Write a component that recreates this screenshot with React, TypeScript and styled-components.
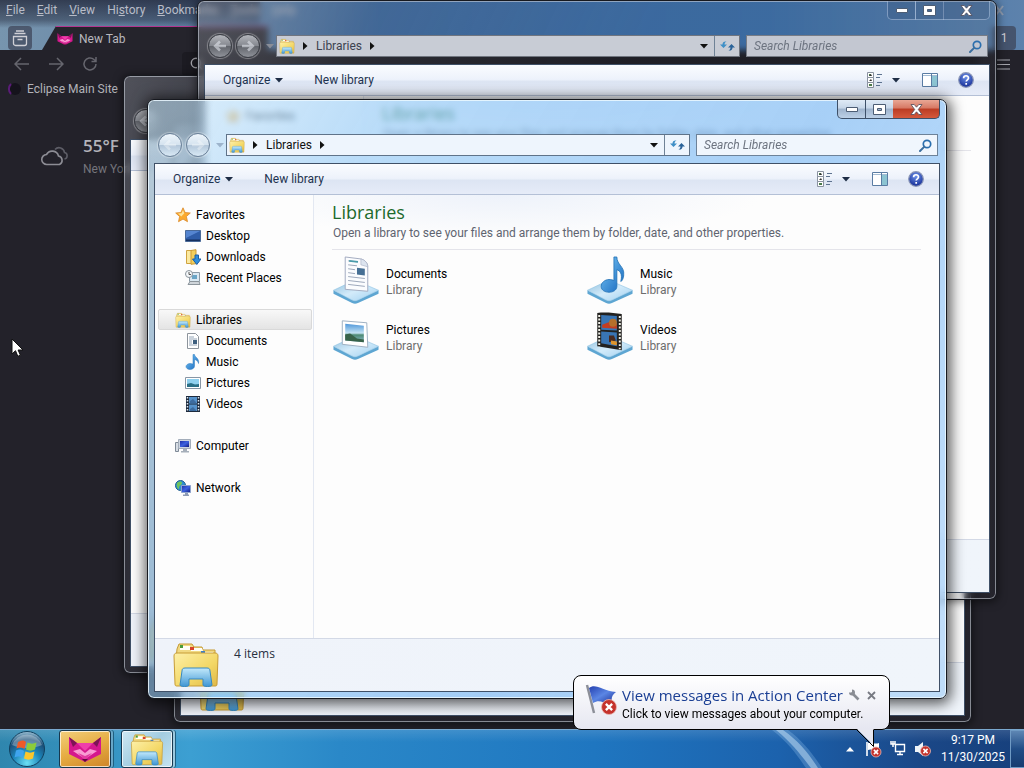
import React from "react";
import styled, { createGlobalStyle, css } from "styled-components";

const GlobalStyle = createGlobalStyle`
  * { box-sizing: border-box; }
  html, body { margin: 0; height: 100%; overflow: hidden; }
  body, button, input {
    font-family: Roboto, "Open Sans", sans-serif;
    font-size: 12px;
    line-height: 16px;
  }
  button { border: 0; padding: 0; margin: 0; background: none; color: inherit; }
  ul { list-style: none; margin: 0; padding: 0; }
  h1, p { margin: 0; font-weight: 400; }
  svg { display: block; flex: none; }
`;

const Desktop = styled.div`
  display: flex;
  flex-direction: column;
  height: 100vh;
  background: #23222a;
`;

const Workspace = styled.main`
  position: relative;
  flex: 1;
  min-height: 0;
  overflow: hidden;
`;

/* ---------- browser behind the folders ---------- */

const Browser = styled.section`
  display: flex;
  flex-direction: column;
  height: 100%;
  background: #23222a;
  color: #c6c6cc;
`;

const BrowserTop = styled.div`
  height: 50px;
  background:
    linear-gradient(180deg, rgba(24, 26, 44, 0.7) 0, rgba(24, 26, 44, 0.4) 20px, rgba(24, 26, 44, 0) 28px) 0 0 / 260px 30px no-repeat,
    linear-gradient(90deg, #7795ae 0, #6484a6 180px, #3a6ba6 380px, #3d70aa 75%, #5d82ac 100%);
`;

const MenuBar = styled.nav`
  display: flex;
  align-items: center;
  gap: 12px;
  height: 20px;
  padding: 0 11px 0 6px;
  color: #b9bdc8;
`;

const MenuSpace = styled.span`
  flex: 1;
`;

const TabStrip = styled.div`
  display: flex;
  align-items: stretch;
  height: 30px;
  padding: 6px 8px 0;
`;

const StripButton = styled.button`
  display: grid;
  place-items: center;
  width: 24px;
  height: 24px;
  border-radius: 4px;
  background: rgba(60, 66, 84, 0.7);
  color: #d0d0d6;
`;

const Tab = styled.button`
  display: flex;
  align-items: center;
  gap: 6px;
  width: 226px;
  margin-left: 10px;
  padding-left: 15px;
  background: #25242c;
  clip-path: polygon(14px 0, 100% 0, 100% 100%, 0 100%);
  border-top: 1px solid #b3358f;
  color: #b8b8be;
`;

const StripSpace = styled.span`
  flex: 1;
`;

const BrowserTools = styled.div`
  display: flex;
  align-items: center;
  gap: 18px;
  height: 28px;
  padding: 0 14px;
  color: #66666e;
`;

const UrlBox = styled.button`
  display: flex;
  align-items: center;
  flex: 1;
  height: 24px;
  margin-left: 66px;
  padding-left: 8px;
  border-radius: 4px;
  background: #1c1b22;
  color: #a9a9b0;
`;

const Bookmark = styled.a`
  display: flex;
  align-items: center;
  gap: 6px;
  height: 22px;
  padding-left: 6px;
  color: #b2b2b8;
  text-decoration: none;
`;

const Weather = styled.div`
  display: flex;
  align-items: center;
  gap: 12px;
  margin-top: 34px;
  padding-left: 39px;
  color: #75757c;
`;

const Temperature = styled.div`
  padding-bottom: 3px;
  font-family: "Open Sans", sans-serif;
  font-size: 17px;
  line-height: 24px;
  font-weight: 600;
  color: #b4b4ba;
`;

/* ---------- explorer windows ---------- */

type Place = { top: number; left: number; right: number; bottom: number };

const Frame = styled.section<{ $place: Place; $active?: boolean }>`
  position: absolute;
  top: ${(p) => p.$place.top}px;
  left: ${(p) => p.$place.left}px;
  right: ${(p) => p.$place.right}px;
  bottom: ${(p) => p.$place.bottom}px;
  display: flex;
  flex-direction: column;
  padding: 0 6px 6px;
  border: 1px solid #17191f;
  border-radius: 7px;
  backdrop-filter: blur(3px);
  ${(p) =>
    p.$active
      ? css`
          background:
            linear-gradient(90deg, rgba(110, 130, 145, 0.35) 0, rgba(110, 130, 145, 0.3) 45px, rgba(255, 255, 255, 0) 65px),
            linear-gradient(120deg, rgba(205, 232, 250, 0.65) 0, rgba(140, 198, 246, 0.6) 22%, rgba(122, 184, 244, 0.65) 60%, rgba(175, 212, 248, 0.75) 100%);
          box-shadow: inset 0 0 0 1px rgba(235, 248, 255, 0.85), 1px 2px 14px 3px rgba(0, 0, 0, 0.65);
        `
      : css`
          background: linear-gradient(115deg, rgba(150, 155, 165, 0.4) 0, rgba(90, 95, 105, 0.25) 160px, rgba(60, 66, 76, 0.1) 420px);
          box-shadow: inset 0 0 0 1px rgba(200, 205, 215, 0.6), 0 1px 8px 1px rgba(0, 0, 0, 0.5);
        `}
`;

const Caption = styled.div`
  display: flex;
  justify-content: flex-end;
  height: 30px;
`;

const CaptionButton = styled.button<{ $active?: boolean; $close?: boolean }>`
  display: grid;
  place-items: center;
  width: ${(p) => (p.$close ? 47 : 29)}px;
  height: 19px;
  border: 1px solid ${(p) => (p.$active ? "#3d5068" : "rgba(190, 210, 235, 0.5)")};
  border-top: 0;
  border-left-width: ${(p) => (p.$close ? 0 : 1)}px;
  margin-right: ${(p) => (p.$close ? 0 : -1)}px;
  border-radius: ${(p) => (p.$close ? "0 0 5px 0" : "0")};
  &:first-child { border-bottom-left-radius: 5px; }
  background: ${(p) =>
    !p.$active
      ? "rgba(30, 50, 85, 0.15)"
      : p.$close
        ? "linear-gradient(#e9a795 0, #d67863 45%, #bb3c23 50%, #d5593c 100%)"
        : "linear-gradient(#dfeaf6 0, #c6d6e8 45%, #9fb4cd 50%, #bcd0e6 100%)"};
`;

const NavRow = styled.div`
  display: flex;
  align-items: center;
  height: 30px;
  margin-bottom: 3px;
  padding: 0 2px 0 4px;
`;

const RoundButton = styled.button<{ $active?: boolean }>`
  display: grid;
  place-items: center;
  width: 24px;
  height: 24px;
  margin-right: 4px;
  border: 1px solid ${(p) => (p.$active ? "#6b8199" : "#3c3f46")};
  border-radius: 50%;
  color: ${(p) => (p.$active ? "rgba(255,255,255,.35)" : "rgba(225,228,235,.6)")};
  background: ${(p) =>
    p.$active
      ? "linear-gradient(#eef5fb 0, #d5e3ef 48%, #b3c7da 52%, #d9e9f5 100%)"
      : "linear-gradient(#b4b6bc 0, #85888f 48%, #62656c 52%, #8f9299 100%)"};
  box-shadow: 0 0 1px 1px rgba(255, 255, 255, 0.35);
`;

const Recent = styled.button`
  display: grid;
  place-items: center;
  width: 12px;
  height: 20px;
`;

const Address = styled.div<{ $active?: boolean }>`
  display: flex;
  align-items: center;
  flex: 1;
  height: 22px;
  border: 1px solid ${(p) => (p.$active ? "#5f7389" : "#70757f")};
  background: ${(p) => (p.$active ? "#eef5fd" : "#c8ccd5")};
  color: ${(p) => (p.$active ? "#111" : "#3d4250")};
`;

const Crumb = styled.button<{ $indent: number }>`
  display: flex;
  align-items: center;
  gap: 8px;
  padding-left: ${(p) => p.$indent}px;
`;

const Space = styled.span`
  flex: 1;
`;

const AddressButton = styled.button<{ $ruled?: boolean }>`
  display: grid;
  place-items: center;
  width: ${(p) => (p.$ruled ? 25 : 20)}px;
  height: 20px;
  border-left: ${(p) => (p.$ruled ? "1px solid #6f8296" : "0")};
`;

const Search = styled.label<{ $active?: boolean }>`
  display: flex;
  align-items: center;
  width: 242px;
  height: 22px;
  margin-left: 6px;
  padding: 0 5px 0 7px;
  border: 1px solid ${(p) => (p.$active ? "#6d8299" : "#777c86")};
  background: ${(p) => (p.$active ? "#f0f6fd" : "#c3c7d1")};
  input {
    flex: 1;
    min-width: 0;
    border: 0;
    padding: 0;
    background: transparent;
    outline: 0;
  }
  input::placeholder { color: #6d7480; font-style: italic; opacity: 1; }
`;

const Client = styled.div`
  display: flex;
  flex-direction: column;
  flex: 1;
  min-height: 0;
  border: 1px solid #3f5067;
  background: #fdfdfd;
  color: #000;
`;

const CommandBar = styled.div`
  display: flex;
  align-items: center;
  height: 31px;
  padding: 0 15px 0 18px;
  border-bottom: 1px solid #b4c0d6;
  background: linear-gradient(#fafcff 0, #edf2fb 48%, #dde5f3 55%, #e6ecf8 100%);
  color: #1e3350;
`;

const Command = styled.button`
  display: flex;
  align-items: center;
  gap: 5px;
  margin-right: 31px;
`;

const ToolIcon = styled.button<{ $gap: number }>`
  margin-left: ${(p) => p.$gap}px;
`;

const Body = styled.div`
  display: flex;
  flex: 1;
  min-height: 0;
`;

const Tree = styled.nav`
  width: 159px;
  padding: 9px 1px 0 3px;
  border-right: 1px solid #e3e8f2;
  ul + ul { margin-top: 21px; }
`;

const TreeItem = styled.a<{ $nested?: boolean; $selected?: boolean }>`
  display: flex;
  align-items: center;
  gap: 5px;
  height: 21px;
  padding-left: ${(p) => (p.$nested ? 26 : 16)}px;
  border: 1px solid ${(p) => (p.$selected ? "#d9d9d9" : "transparent")};
  border-radius: 2px;
  background: ${(p) => (p.$selected ? "linear-gradient(#f8f8f8, #e4e4e4)" : "none")};
  color: #000;
  text-decoration: none;
`;

const Content = styled.div`
  flex: 1;
  min-width: 0;
  padding: 5px 18px 0;
  background: radial-gradient(ellipse 260px 44px at 30% 0, rgba(236, 241, 250, 0.9), rgba(253, 253, 253, 0));
`;

const Header = styled.header`
  padding-bottom: 8px;
  border-bottom: 1px solid #e4e4ea;
`;

const Title = styled.h1`
  font-family: "Open Sans", sans-serif;
  font-size: 18px;
  line-height: 25px;
  color: #1c6a2c;
`;

const Hint = styled.p`
  padding-left: 1px;
  color: #5f6470;
  white-space: nowrap;
`;

const Grid = styled.ul`
  display: grid;
  grid-template-columns: repeat(auto-fill, 254px);
  padding-top: 2px;
`;

const Library = styled.a`
  display: flex;
  align-items: center;
  gap: 6px;
  height: 56px;
  color: #000;
  text-decoration: none;
`;

const LibraryText = styled.span`
  padding-top: 4px;
`;

const Kind = styled.span`
  display: block;
  color: #6d6d6d;
`;

const Details = styled.footer`
  display: flex;
  align-items: flex-start;
  gap: 14px;
  height: 53px;
  padding: 1px 17px;
  border-top: 1px solid #d3d9e6;
  background: linear-gradient(90deg, #eff3fa, #f0f5fb);
  color: #27303f;
`;

const Count = styled.span`
  padding-top: 6px;
  font-family: "Open Sans", sans-serif;
`;

/* ---------- notification ---------- */

const Balloon = styled.aside`
  position: absolute;
  right: 134px;
  bottom: 38px;
  display: flex;
  gap: 4px;
  width: 317px;
  height: 55px;
  padding: 8px 10px 0 11px;
  border: 1px solid #000;
  border-radius: 8px;
  background: linear-gradient(#ffffff, #e6e7f1);
`;

const BalloonText = styled.div`
  flex: 1;
  white-space: nowrap;
`;

const BalloonTop = styled.div`
  display: flex;
  align-items: center;
  gap: 5px;
  height: 22px;
`;

const BalloonLink = styled.a`
  font-family: "Open Sans", sans-serif;
  font-size: 15px;
  line-height: 22px;
  color: #1b3f94;
  text-decoration: none;
`;

const BalloonButton = styled.button`
  width: 14px;
  height: 18px;
`;

const Tail = styled.svg`
  position: absolute;
  right: 12px;
  top: 52px;
`;

/* ---------- taskbar ---------- */

const Taskbar = styled.footer`
  display: flex;
  align-items: center;
  height: 39px;
  border-top: 1px solid #7aa9cf;
  background:
    linear-gradient(180deg, rgba(255, 255, 255, 0.12), rgba(255, 255, 255, 0) 12px),
    linear-gradient(90deg, #2f86ae 0, #3c9fd2 190px, #2a88c8 340px, #1f76c0 58%, #1c62ad 76%, #1a4787 90%, #17407c 100%);
  color: #fff;
`;

const Start = styled.button`
  display: grid;
  place-items: center;
  width: 54px;
  height: 38px;
`;

const Task = styled.button<{ $warm?: boolean }>`
  display: grid;
  place-items: center;
  width: 52px;
  height: 38px;
  margin-left: ${(p) => (p.$warm ? 5 : 10)}px;
  border: 1px solid #17384f;
  border-radius: 3px;
  box-shadow: inset 0 0 0 1px rgba(255, 255, 255, 0.7), ${(p) => (p.$warm ? "2px 0 0 #68a7c8, 3px 0 0 #1f5f80" : "2px 0 0 #9cc9de, 3px 0 0 #1f5f80")};
  background: ${(p) => (p.$warm ? "linear-gradient(160deg, #f2cf7c, #e6ac42 50%, #ce8428)" : "linear-gradient(135deg, #cfe8f3, #a3cde0 50%, #c5e3f0)")};
`;

const TaskSpace = styled.div`
  flex: 1;
  display: flex;
  justify-content: flex-end;
  align-self: stretch;
`;

const Tray = styled.div`
  display: flex;
  align-items: center;
  gap: 8px;
`;

const Clock = styled.button`
  width: 66px;
  margin: 0 4px 0 9px;
  text-align: center;
  line-height: 17px;
`;

const ShowDesktop = styled.button`
  width: 14px;
  height: 38px;
  border: 1px solid #6f9ac4;
  border-right: 0;
  background: linear-gradient(#5e86b3, #214d86 50%, #173c70);
`;

const Cursor = styled.svg`
  position: absolute;
  left: 11px;
  top: 338px;
`;

const Defs = styled.svg`
  position: absolute;
  width: 0;
  height: 0;
`;

/* ---------- drawings ---------- */

const SharedGradients = () => (
  <Defs aria-hidden="true">
    <defs>
      <linearGradient id="folder" x1="0" y1="0" x2="1" y2="1">
        <stop offset="0" stopColor="#fdf0a8" /><stop offset=".6" stopColor="#f3d765" /><stop offset="1" stopColor="#dfb848" />
      </linearGradient>
      <linearGradient id="stand" x1="0" y1="0" x2="0" y2="1">
        <stop offset="0" stopColor="#c3e9fb" /><stop offset="1" stopColor="#3e96d4" />
      </linearGradient>
      <linearGradient id="plate" x1="0" y1="0" x2="1" y2="1">
        <stop offset="0" stopColor="#8fbfdd" /><stop offset=".5" stopColor="#d3ebfa" /><stop offset="1" stopColor="#9fd0f0" />
      </linearGradient>
      <linearGradient id="note" x1="0" y1="0" x2="1" y2="1">
        <stop offset="0" stopColor="#7cc9f7" /><stop offset="1" stopColor="#1466bd" />
      </linearGradient>
      <linearGradient id="sky" x1="0" y1="0" x2="0" y2="1">
        <stop offset="0" stopColor="#4f97da" /><stop offset=".5" stopColor="#c4e3f3" /><stop offset=".6" stopColor="#4c8a73" /><stop offset="1" stopColor="#8fbdd1" />
      </linearGradient>
      <linearGradient id="screen" x1="0" y1="0" x2="1" y2="1">
        <stop offset="0" stopColor="#1d2ea8" /><stop offset=".5" stopColor="#3c62e0" /><stop offset="1" stopColor="#101a80" />
      </linearGradient>
      <radialGradient id="orb" cx=".5" cy=".9" r=".9">
        <stop offset="0" stopColor="#6ce0f5" /><stop offset=".45" stopColor="#1b83b8" /><stop offset=".75" stopColor="#1d4f78" /><stop offset="1" stopColor="#9fc4d8" />
      </radialGradient>
      <radialGradient id="help" cx=".5" cy=".3" r=".7">
        <stop offset="0" stopColor="#6d92ea" /><stop offset="1" stopColor="#142c94" />
      </radialGradient>
      <linearGradient id="flag" x1="0" y1="0" x2="1" y2="1">
        <stop offset="0" stopColor="#2440b0" /><stop offset=".5" stopColor="#5b86e4" /><stop offset="1" stopColor="#1a2f96" />
      </linearGradient>
    </defs>
  </Defs>
);

const Down = ({ color = "#1e2d45" }: { color?: string }) => (
  <svg width="8" height="5" viewBox="0 0 8 5"><path d="M0 0h8L4 4.5z" fill={color} /></svg>
);
const Right = () => (
  <svg width="5" height="8" viewBox="0 0 5 8"><path d="M0 0v8l4.5-4z" fill="#111" /></svg>
);

const LibrariesIcon = ({ size = 16 }: { size?: number }) => (
  <svg width={size} height={size} viewBox="0 0 48 48">
    <path d="M5 9l2-5h13l2 3h8l1 3h12v10H4z" fill="#f1d981" stroke="#c59a34" />
    <path d="M8 6h10l1 4H8zM19 8h11l1 3H19zM30 12h11v3H30z" fill="#fffef5" />
    <path d="M8 5h3v3H8z" fill="#4a9c38" /><path d="M18 7h4v3h-4z" fill="#d8432c" /><path d="M29 11h4v2h-4z" fill="#3b7fcb" />
    <path d="M2 16c0-2 1-3 3-3h38c2 0 3 1 3 3l-1 28c0 2-1 2-2 2H5c-1 0-2 0-2-2z" fill="url(#folder)" stroke="#c79c36" />
    <path d="M8 45l2-14c0-2 1-3 3-3h22c2 0 3 1 3 3l2 14c0 2-9 2-9 0v-6H17v6c0 2-9 2-9 0z" fill="url(#stand)" stroke="#3789c2" />
  </svg>
);

const StarIcon = () => (
  <svg width="16" height="16" viewBox="0 0 16 16"><path d="M8 .8l2.1 4.7 5.2.5-3.9 3.500 1.100 5.200L8 12.100l-4.500 2.600 1.100-5.200L.7 6l5.200-.5z" fill="#fba92c" stroke="#d98a2c" strokeWidth=".8" /><path d="M8 3l1.300 3.200-3 3.200L3 6.600l3.500-.4z" fill="#fde39a" /></svg>
);
const DesktopIcon = () => (
  <svg width="16" height="16" viewBox="0 0 16 16"><path d="M.5 2.500h15v11H.5z" fill="#2f5da8" stroke="#4a6a98" /><path d="M1 3h14L1 10z" fill="#5585d0" /><path d="M1 11.500h14V13H1z" fill="#16305e" /></svg>
);
const DownloadsIcon = () => (
  <svg width="16" height="16" viewBox="0 0 16 16"><path d="M1.500 1.500h5l1 1v12h-6z" fill="#fbe9a0" stroke="#cfa340" /><path d="M6 1.500l5-.8v14l-5 .6z" fill="#f2cf5c" stroke="#cb9b36" /><path d="M10 6h3.500v4H16L11.800 15.500 7.500 10H10z" fill="#2f8fdc" stroke="#1a5fa8" /></svg>
);
const RecentIcon = () => (
  <svg width="16" height="16" viewBox="0 0 16 16"><path d="M4.500 2.500h10v9h-10z" fill="#dbe9f2" stroke="#8b9aa6" /><path d="M7 5h5v4H7z" fill="#6aa5c6" /><path d="M3 14.500h12l-1-3H5z" fill="#cfd5da" stroke="#8c959c" /><circle cx="4" cy="4" r="3.500" fill="#f5f8fa" stroke="#8b949c" /><path d="M4 2v2.500h2" fill="none" stroke="#555" /></svg>
);
const DocumentIcon = () => (
  <svg width="16" height="16" viewBox="0 0 16 16"><path d="M2.500.5h8l3 3v12h-11z" fill="#fff" stroke="#8d949c" /><path d="M4 4h5M4 6h8M4 8h3M4 10h3M4 12h8" stroke="#95a6b8" /><path d="M8 7h4v4H8z" fill="#3e5f7e" /></svg>
);
const MusicIcon = () => (
  <svg width="16" height="16" viewBox="0 0 16 16"><path d="M8 .5h1.500c.3 3 5 3.500 4 9-.4-2.500-2-3.500-4-4V12c0 2-2 3.500-4.500 3.500S1 14 1 12.500 3 9.500 5 9.500c1.200 0 2 .2 3 .6z" fill="url(#note)" stroke="#2a79bf" strokeWidth=".5" /></svg>
);
const PictureIcon = () => (
  <svg width="16" height="16" viewBox="0 0 16 16"><path d="M.5 2.500h15v11H.5z" fill="#fff" stroke="#8896a5" /><path d="M2 4h12v8H2z" fill="#8fd0ee" /><path d="M2 9l4-1 4 1.500 4-.5v3H2z" fill="#2a6f86" /></svg>
);
const VideoIcon = () => (
  <svg width="16" height="16" viewBox="0 0 16 16"><path d="M1 0h14v16H1z" fill="#1d2a3d" /><path d="M4 1h8v6.500H4zM4 8.500h8V15H4z" fill="#5592cb" /><path d="M5 5l3-2 3 3v1.500H5zM5 13l3-2 3 3v1H5z" fill="#3d6c9f" /><path d="M2.500 1v14M13.500 1v14" stroke="#dfe8f0" strokeWidth="1.500" strokeDasharray="1.500 1.500" /></svg>
);
const ComputerIcon = () => (
  <svg width="16" height="16" viewBox="0 0 16 16"><path d="M.5 4.500h3v9h-3z" fill="#d7dde4" stroke="#7f8a97" /><path d="M3.500 1.500h12v9h-12z" fill="#cdd5e0" stroke="#a3adba" /><path d="M5 3h9v6H5z" fill="url(#screen)" /><path d="M8 11h4v2h2v1.500H6V13h2z" fill="#a6afba" /></svg>
);
const NetworkIcon = () => (
  <svg width="16" height="16" viewBox="0 0 16 16"><circle cx="5.500" cy="5.500" r="5" fill="#2f8fd0" stroke="#1d5c8f" /><path d="M2 3c2-2 5-2 5 0S4 5 4 8 1 7 2 3z" fill="#6fc45c" /><path d="M6.500 5.500h9v7h-9z" fill="url(#screen)" stroke="#8fa3cc" /><path d="M10 13h3v1.500h1V16H8v-1.500h2z" fill="#8d9bb4" /></svg>
);

const Plate = () => (
  <>
    <path d="M1 35l19 10c2 1 4 1 6 0l21-10v3.500L26 48c-2 1-4 1-6 0L1 38.500z" fill="#5ea6d2" />
    <path d="M1 35l19-9c2-1 4-1 6 0l21 9-21 10c-2 1-4 1-6 0z" fill="url(#plate)" stroke="#8cc2e2" strokeWidth=".6" />
  </>
);
const big = { width: 48, height: 48, viewBox: "0 0 48 49" };
const DocumentsLibrary = () => (
  <svg {...big}><Plate /><path d="M13 1l16 2c4 1 7 4 7 8v25l-23-2z" fill="#fbfcfe" stroke="#a3abc0" /><path d="M29 3v6l7 2c0-4-3-7-7-8z" fill="#dce4ef" stroke="#a3abc0" strokeWidth=".6" /><path d="M16 5l10 1M16 9l9 1M16 13l7 1M16 17l7 1M16 21l17 2M16 25l17 2M16 29l17 2" stroke="#9ca7ba" /><path d="M25 12l8 1v7l-8-1z" fill="#466f94" /><path d="M17 5l9 1" stroke="#4a9cab" strokeWidth="2" /></svg>
);
const MusicLibrary = () => (
  <svg {...big}><Plate /><path d="M28 1h3c0 8 8 10 7 18 0 4-2 7-3 7 2-8-1-11-4-12v17c0 4-4 6-8 6s-8-2-8-6 4-7 8-7c2 0 4 .5 5 1z" fill="url(#note)" stroke="#1d6eb4" strokeWidth=".8" /></svg>
);
const PicturesLibrary = () => (
  <svg {...big}><Plate /><path d="M10 9l25 2 1 25-26-3z" fill="#fff" stroke="#9fb0c2" /><path d="M13 12l19 2v17l-19-2z" fill="url(#sky)" /><path d="M13 23l5-1 7 5 7 1v3l-19-2z" fill="#38634a" /></svg>
);
const VideosLibrary = () => (
  <svg {...big}><Plate /><path d="M11 1c8-1 17 0 25 1v37l-25-4z" fill="#232220" /><path d="M15 3l16 1v15l-16-1zM15 20l16 1v14l-16-3z" fill="#3975b4" /><path d="M16 13l8-3 7 2v5l-15-1z" fill="#c33d22" /><circle cx="27" cy="11" r="4" fill="#b6702b" /><path d="M23 24h5l2 5-7 2z" fill="#4a2b20" /><path d="M25 29l6 1v4l-6-1z" fill="#e0952b" /><path d="M13 3v33M34 4v34" stroke="#f2f2ea" strokeWidth="2" strokeDasharray="2 1.600" /></svg>
);

const RefreshIcon = () => (
  <svg width="15" height="14" viewBox="0 0 15 14"><path d="M0 5.500L3.500 9 7 5.500H4.500C4.500 3.800 5.500 3 6.500 2.500c-2.500-.5-4 .8-4 3z" fill="#3f8fc6" /><path d="M15 8.500L11.500 5 8 8.500h2.500c0 1.700-1 2.500-2 3 2.500.5 4-.8 4-3z" fill="#2a6298" /></svg>
);
const SearchIcon = () => (
  <svg width="13" height="13" viewBox="0 0 13 13"><circle cx="8" cy="5" r="3.700" fill="none" stroke="#2b6fae" strokeWidth="1.700" /><path d="M5.400 7.600L1 12" stroke="#3b6f9f" strokeWidth="2" strokeLinecap="round" /></svg>
);
const ViewIcon = () => (
  <svg width="17" height="16" viewBox="0 0 17 16"><path d="M1.500.5h6v5h-6zM1.500 5.500h6v5h-6zM1.500 10.500h6v5h-6z" fill="#fff" stroke="#8a93a0" /><path d="M3 2h2v2H3zM3 12h3v2H3z" fill="#4a7a4a" /><path d="M3 4l2-2 1 2zM3 9l2-2 1 2z" fill="#333" /><path d="M11 2.500h5M10 5.500h4M11 10.500h5M10 13.500h4" stroke="#5e7390" /></svg>
);
const PaneIcon = () => (
  <svg width="16" height="14" viewBox="0 0 16 14"><path d="M.5.5h15v13H.5z" fill="#fff" stroke="#5a7ca3" /><path d="M1 2.500h14" stroke="#a4bcd4" /><path d="M10 3h5v10h-5z" fill="#8cc4d2" /><path d="M9.500 1v12" stroke="#5a7ca3" /></svg>
);
const HelpIcon = () => (
  <svg width="16" height="16" viewBox="0 0 16 16"><circle cx="8" cy="8" r="7.300" fill="url(#help)" stroke="#8b97b8" strokeWidth="1.200" /><path d="M5.600 6.200C5.600 3 10.500 3 10.500 6c0 1.800-2.300 1.800-2.300 3.600M8.200 11v1.800" stroke="#fff" strokeWidth="1.700" fill="none" /></svg>
);
const Arrow = ({ flip }: { flip?: boolean }) => (
  <svg width="14" height="12" viewBox="0 0 14 12"><path d={flip ? "M1 6h10M7 1.500L11.800 6 7 10.500" : "M13 6H3M7 1.500L2.200 6 7 10.500"} fill="none" stroke="currentColor" strokeWidth="2.600" /></svg>
);
const ThinArrow = ({ flip }: { flip?: boolean }) => (
  <svg width="16" height="14" viewBox="0 0 16 14"><path d={flip ? "M1 7h14M9 1l6 6-6 6" : "M15 7H1M7 1L1 7l6 6"} fill="none" stroke="currentColor" strokeWidth="1.500" /></svg>
);
const FoxIcon = ({ size }: { size: number }) => (
  <svg width={size} height={size} viewBox="0 -3 34 34"><path d="M1 2l8 6h16l8-6v17L17 27 1 19z" fill="#d5178d" /><path d="M1 2l8 6-4 4zM33 2l-8 6 4 4z" fill="#7d1355" /><path d="M9 8l8 8 8-8z" fill="#ef3eaa" /><path d="M5 16l7-2 5 4 5-4 7 2-12 8z" fill="#f99ad3" /><path d="M10 18l7 3 7-3-7 7z" fill="#e23ba2" /><path d="M14 24h6l-3 3z" fill="#5b0d3c" /></svg>
);
const ErrorBadge = ({ x, y, r }: { x: number; y: number; r: number }) => (
  <g><circle cx={x} cy={y} r={r} fill="#c5332c" stroke="#e9b9b4" strokeWidth=".8" /><path d={`M${x - r / 2.4} ${y - r / 2.4}L${x + r / 2.4} ${y + r / 2.4}M${x + r / 2.4} ${y - r / 2.4}L${x - r / 2.4} ${y + r / 2.4}`} stroke="#fff" strokeWidth={r / 3.2} /></g>
);

/* ---------- assembled parts ---------- */

const tree = [
  [{ label: "Favorites", Icon: StarIcon }, { label: "Desktop", Icon: DesktopIcon }, { label: "Downloads", Icon: DownloadsIcon }, { label: "Recent Places", Icon: RecentIcon }],
  [{ label: "Libraries", Icon: LibrariesIcon }, { label: "Documents", Icon: DocumentIcon }, { label: "Music", Icon: MusicIcon }, { label: "Pictures", Icon: PictureIcon }, { label: "Videos", Icon: VideoIcon }],
  [{ label: "Computer", Icon: ComputerIcon }],
  [{ label: "Network", Icon: NetworkIcon }],
];

const collapsedTree = [[tree[0][0]]];

const libraries = [
  { name: "Documents", Icon: DocumentsLibrary },
  { name: "Music", Icon: MusicLibrary },
  { name: "Pictures", Icon: PicturesLibrary },
  { name: "Videos", Icon: VideosLibrary },
];

type ExplorerProps = { place: Place; active?: boolean; groups?: typeof tree; children?: React.ReactNode; count?: string; chrome?: boolean };

const Explorer = ({ place, active, groups = [], children, count, chrome = true }: ExplorerProps) => (
  <Frame $place={place} $active={active} aria-label="Libraries window">
    <Caption>
      {chrome && (
        <>
          <CaptionButton $active={active} aria-label="Minimize">
            <svg width="12" height="5" viewBox="0 0 12 5"><path d="M.5.5h11v4H.5z" fill="#fff" stroke="#4c5d74" /></svg>
          </CaptionButton>
          <CaptionButton $active={active} aria-label="Maximize">
            <svg width="13" height="11" viewBox="0 0 13 11"><path d="M.5.5h12v10H.5zM4.500 4.500h4v2h-4z" fill="#fff" fillRule="evenodd" stroke="#4c5d74" /></svg>
          </CaptionButton>
          <CaptionButton $active={active} $close aria-label="Close">
            <svg width="13" height="11" viewBox="0 0 13 11"><path d="M1 .5h3.200l2.300 2.700L8.800.5H12L8.300 5.500l3.700 5H8.800L6.500 7.800l-2.300 2.700H1l3.700-5z" fill="#fff" stroke="#4f4a58" strokeWidth=".8" /></svg>
          </CaptionButton>
        </>
      )}
    </Caption>
    <NavRow>
      <RoundButton $active={active} aria-label="Back"><Arrow /></RoundButton>
      {chrome && (
        <>
          <RoundButton $active={active} aria-label="Forward"><Arrow flip /></RoundButton>
          <Recent aria-label="Recent pages"><Down color={active ? "#9db4cc" : "#8a8e98"} /></Recent>
          <Address $active={active}>
            <Crumb $indent={2} aria-label="All locations"><LibrariesIcon size={16} /><Right /></Crumb>
            <Crumb $indent={8}>Libraries<Right /></Crumb>
            <Space />
            <AddressButton aria-label="Previous locations"><Down color="#111" /></AddressButton>
            <AddressButton $ruled aria-label="Refresh"><RefreshIcon /></AddressButton>
          </Address>
          <Search $active={active}>
            <input type="search" placeholder="Search Libraries" aria-label="Search Libraries" />
            <SearchIcon />
          </Search>
        </>
      )}
    </NavRow>
    <Client>
      <CommandBar>
        {chrome && (
          <>
            <Command>Organize<Down /></Command>
            <Command>New library</Command>
            <Space />
            <ToolIcon $gap={0} aria-label="Change your view"><ViewIcon /></ToolIcon>
            <ToolIcon $gap={9} aria-label="More view options"><Down /></ToolIcon>
            <ToolIcon $gap={22} aria-label="Show the preview pane"><PaneIcon /></ToolIcon>
            <ToolIcon $gap={20} aria-label="Get help"><HelpIcon /></ToolIcon>
          </>
        )}
      </CommandBar>
      <Body>
        <Tree>
          {groups.map((group) => (
            <ul key={group[0].label}>
              {group.map(({ label, Icon }, i) => (
                <li key={label}>
                  <TreeItem href="#" $nested={i > 0} $selected={label === "Libraries"}><Icon />{label}</TreeItem>
                </li>
              ))}
            </ul>
          ))}
        </Tree>
        <Content>{children}</Content>
      </Body>
      <Details><LibrariesIcon size={48} />{count && <Count>{count}</Count>}</Details>
    </Client>
  </Frame>
);

const LibraryHeader = () => (
  <Header>
    <Title>Libraries</Title>
    <Hint>Open a library to see your files and arrange them by folder, date, and other properties.</Hint>
  </Header>
);

const menus = ["File", "Edit", "View"];

const App = () => (
  <Desktop>
    <GlobalStyle />
    <SharedGradients />
    <Workspace>
      <Browser>
        <BrowserTop>
          <MenuBar>
            {menus.map((m) => <button key={m}><u>{m[0]}</u>{m.slice(1)}</button>)}
            <button>Hi<u>s</u>tory</button>
            <button><u>B</u>ookmarks</button>
            <button><u>T</u>ools</button>
            <button><u>H</u>elp</button>
            <MenuSpace />
            <button aria-label="Close browser"><svg width="18" height="11" viewBox="0 0 18 11"><path d="M1 1l7 9M8 1L1 10" stroke="#8f9cb0" strokeWidth="2" /></svg></button>
          </MenuBar>
          <TabStrip>
            <StripButton aria-label="Recent browsing">
              <svg width="16" height="17" viewBox="0 0 16 17"><path d="M4 1h8M2.500 3.500h11M1.500 6.500h13v7a2 2 0 0 1-2 2h-9a2 2 0 0 1-2-2zM5.500 9.500h5" fill="none" stroke="currentColor" strokeWidth="1.300" /></svg>
            </StripButton>
            <Tab><FoxIcon size={16} />New Tab</Tab>
            <StripSpace />
            <StripButton>1</StripButton>
          </TabStrip>
        </BrowserTop>
        <BrowserTools>
          <button aria-label="Back"><ThinArrow /></button>
          <button aria-label="Forward"><ThinArrow flip /></button>
          <button aria-label="Reload"><svg width="16" height="16" viewBox="0 0 16 16"><path d="M14 8a6 6 0 1 1-2-4.500L14 5M14 1v4.500H9.500" fill="none" stroke="currentColor" strokeWidth="1.500" /></svg></button>
          <UrlBox aria-label="Search or enter address"><svg width="14" height="14" viewBox="0 0 14 14"><circle cx="6" cy="6" r="4.700" fill="none" stroke="currentColor" strokeWidth="1.400" /><path d="M9.500 9.500L13 13" stroke="currentColor" strokeWidth="1.400" /></svg></UrlBox>
          <button aria-label="Menu"><svg width="14" height="11" viewBox="0 0 14 11"><path d="M0 1h14M0 5.500h14M0 10h14" stroke="#a6a6ad" strokeWidth="1.200" /></svg></button>
        </BrowserTools>
        <Bookmark href="#"><svg width="15" height="16" viewBox="0 0 15 16"><circle cx="9" cy="8" r="6" fill="#15131c" /><path d="M5 3a7 7 0 0 0 0 10" fill="none" stroke="#5a1c78" strokeWidth="2" /></svg>Eclipse Main Site</Bookmark>
        <Weather>
          <svg width="32" height="22" viewBox="0 0 32 22"><path d="M8 19.500a5 5 0 0 1-.5-10A6.500 6.500 0 0 1 19.500 11a4.500 4.500 0 0 1 1 8.500z" fill="none" stroke="#8d8d95" strokeWidth="1.600" /><path d="M16 4.500a5.500 5.500 0 0 1 9.500 3c3.500.5 3.500 6 0 6.500" fill="none" stroke="#5d5d66" strokeWidth="1.600" /></svg>
          <div><Temperature>55°F</Temperature>New York City</div>
        </Weather>
      </Browser>

      <Explorer place={{ top: 75, left: 123, right: 101, bottom: 55 }} chrome={false} />
      <Explorer place={{ top: 124, left: 173, right: 52, bottom: 6 }} chrome={false} />
      <Explorer place={{ top: 0, left: 197, right: 27, bottom: 129 }} groups={collapsedTree}>
        <LibraryHeader />
      </Explorer>
      <Explorer place={{ top: 99, left: 147, right: 77, bottom: 30 }} active groups={tree} count="4 items">
        <LibraryHeader />
        <Grid>
          {libraries.map(({ name, Icon }) => (
            <li key={name}>
              <Library href="#"><Icon /><LibraryText>{name}<Kind>Library</Kind></LibraryText></Library>
            </li>
          ))}
        </Grid>
      </Explorer>
      <Cursor width="13" height="20" viewBox="0 0 13 20"><path d="M1 1v15l3.500-3.300 2.300 5.600 2.600-1.100L7.100 12H12z" fill="#fff" stroke="#111" /></Cursor>
    </Workspace>

    <Taskbar>
      <Start aria-label="Start">
        <svg width="38" height="38" viewBox="0 0 38 38"><circle cx="19" cy="19" r="17.500" fill="url(#orb)" stroke="#10405f" /><path d="M4 15a16 16 0 0 1 30 0c-8 4-22 4-30 0z" fill="#fff" opacity=".3" /><path d="M10 12c3-2 6-2 8 0l-1.500 7c-3-2-5-2-8-.5z" fill="#ee5a28" /><path d="M19.500 12.500c3 1.500 6 1.500 9 0L27 19.500c-3 1.500-6 1.500-9 0z" fill="#8ccc3a" /><path d="M8 20.500c3-1.500 5.500-1.500 8 .5l-1.500 7c-2.500-2-5-2-8-.5z" fill="#3fa4ee" /><path d="M17.500 21.500c3 1.500 6 1.500 9 0L25 28.500c-3 1.500-6 1.500-9 0z" fill="#fcc62c" /></svg>
      </Start>
      <Task $warm aria-label="Browser"><FoxIcon size={34} /></Task>
      <Task aria-label="Windows Explorer"><LibrariesIcon size={34} /></Task>
      <TaskSpace>
        <svg width="136" height="38" viewBox="0 0 136 38"><path d="M62 0h16c14 10 25 24 34 38H96C86 24 80 14 62 0z" fill="#a8d4f6" opacity=".25" /><path d="M66 0h7c17 12 26 24 35 38h-7C90 24 83 14 66 0z" fill="#d6eefc" opacity=".45" /></svg>
      </TaskSpace>
      <Tray>
        <button aria-label="Show hidden icons"><svg width="8" height="5" viewBox="0 0 8 5"><path d="M0 4.500h8L4 0z" fill="#fff" /></svg></button>
        <button aria-label="Action Center"><svg width="20" height="18" viewBox="4 0 20 18"><path d="M9 2v14" stroke="#fff" strokeWidth="1.600" /><path d="M10 3c4-2 6 2 11 0v7c-5 2-7-2-11 0z" fill="#fff" /><ErrorBadge x={18} y={12} r={5} /></svg></button>
        <button aria-label="Network"><svg width="16" height="16" viewBox="0 0 16 16"><path d="M5.500 3.500h9v7h-9zM7 13.500h6M10 11v2" fill="none" stroke="#fff" strokeWidth="1.400" /><path d="M1 0v3h4V0M3 0v6" fill="none" stroke="#fff" strokeWidth="1.500" /></svg></button>
        <button aria-label="Volume"><svg width="17" height="16" viewBox="0 0 17 16"><path d="M1 5h3l5-4v14l-5-4H1z" fill="#eef3f8" /><ErrorBadge x={11.5} y={10} r={5} /></svg></button>
      </Tray>
      <Clock>9:17 PM<br />11/30/2025</Clock>
      <ShowDesktop aria-label="Show desktop" />
    </Taskbar>

    <Balloon role="status">
      <svg width="33" height="33" viewBox="0 0 33 33"><path d="M2 1l7 28" stroke="#8c8f98" strokeWidth="2.400" /><path d="M4 4c7-5 13 3 27 4-4 3-5 6-4 11-9 2-11-5-19 0z" fill="url(#flag)" /><ErrorBadge x={24} y={23} r={7.5} /></svg>
      <BalloonText>
        <BalloonTop>
          <BalloonLink href="#">View messages in Action Center</BalloonLink>
          <BalloonButton aria-label="Options"><svg width="12" height="12" viewBox="0 0 12 12"><path d="M4 4l6.500 6.500" stroke="#8a8d94" strokeWidth="2.600" /><path d="M1 3.500a3 3 0 1 0 3-3v2.500L3 3.500z" fill="#8a8d94" /></svg></BalloonButton>
          <BalloonButton aria-label="Close"><svg width="9" height="9" viewBox="0 0 9 9"><path d="M1 1l7 7M8 1L1 8" stroke="#777a82" strokeWidth="1.800" /></svg></BalloonButton>
        </BalloonTop>
        <p>Click to view messages about your computer.</p>
      </BalloonText>
      <Tail width="22" height="22" viewBox="0 0 22 22"><path d="M1 0L19 18V0z" fill="#e6e7f1" /><path d="M1.500 1.500L18.500 18.500V1.500" fill="none" stroke="#000" /></Tail>
    </Balloon>
  </Desktop>
);

export default App;
